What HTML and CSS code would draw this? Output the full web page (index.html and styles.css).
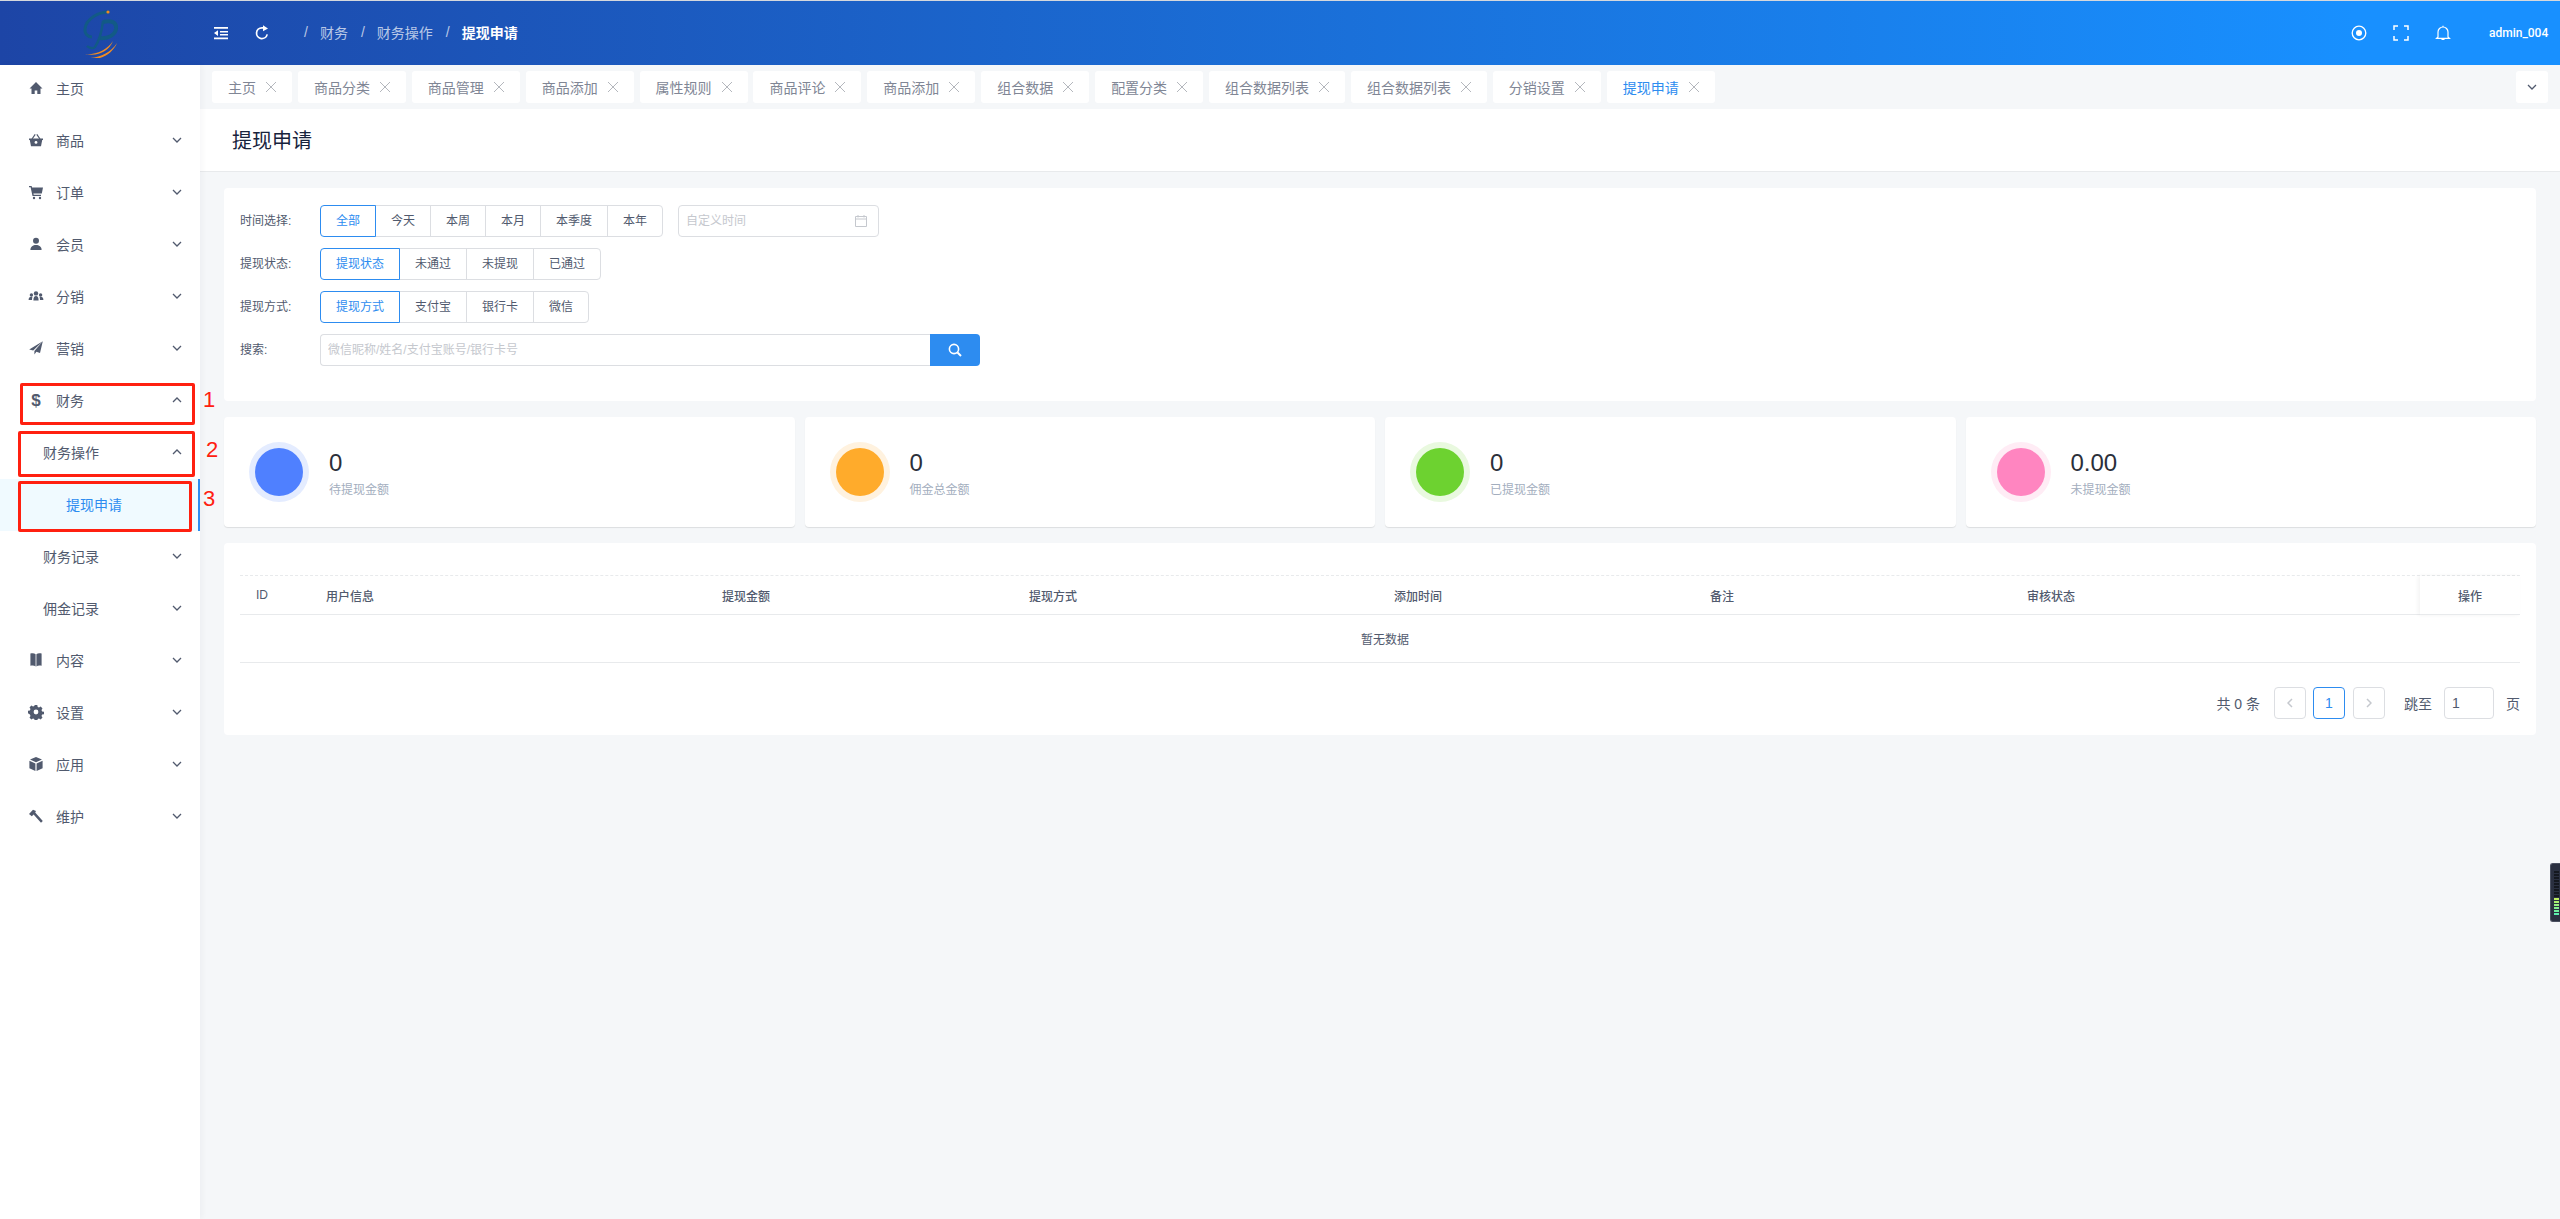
FILE: index.html
```html
<!DOCTYPE html>
<html lang="zh-CN">
<head>
  <meta charset="UTF-8">
  <title>提现申请</title>
  <link rel="stylesheet" href="styles.css">
</head>
<body>
  <div class="header">
    <div class="logo">
      <svg width="40" height="50" viewBox="0 0 40 50">
        <path d="M29 4C18 4 6 11 5 21c-.5 5 3 8 7 8" fill="none" stroke="#125a86" stroke-width="3"/>
        <path d="M23 14c8-2 14 0 13 7-1 6-8 10-16 9" fill="none" stroke="#125a86" stroke-width="4"/>
        <path d="M23 13c-1 9-4 20-8 26-1 2-6 1-8-1" fill="none" stroke="#125a86" stroke-width="2.4"/>
        <circle cx="28" cy="4" r="1.6" fill="#f08c1e"/>
        <path d="M5 46C16 47 27 42 33 33 29 43 18 49 5 46z" fill="#f28c22"/>
        <path d="M4 50C17 51 30 46 37 35 32 47 18 54 4 50z" fill="#f28c22"/>
      </svg>
    </div>
    <svg class="head-icon" viewBox="0 0 16 16"><path d="M1 2h14v1.7H1zM7 6h8v1.6H7zM7 9h8v1.6H7zM1 12.6h14v1.7H1zM5 5.2v5.8L1 8.1z"/></svg>
    <svg class="head-icon refresh" viewBox="0 0 16 16"><path d="M13.2 9.4A5.4 5.4 0 1 1 8 2.8h1.6" fill="none" stroke="#fff" stroke-width="1.7"/><path d="M9 .2 14 3.4 9 6.2z"/></svg>
    <div class="crumbs">
      <span class="sep">/</span><span>财务</span>
      <span class="sep">/</span><span>财务操作</span>
      <span class="sep">/</span><span class="current">提现申请</span>
    </div>
    <div class="head-right">
      <svg class="tool" viewBox="0 0 16 16"><circle cx="8" cy="8" r="6.8" fill="none" stroke="#fff" stroke-width="1.3"/><circle cx="8" cy="8" r="3"/></svg>
      <svg class="tool" viewBox="0 0 16 16"><path d="M1 5V1h4M11 1h4v4M15 11v4h-4M5 15H1v-4" fill="none" stroke="#fff" stroke-width="1.5"/></svg>
      <svg class="tool" viewBox="0 0 16 16"><path d="M3 12V7a5 5 0 0 1 10 0v5l1.4 1.3H1.6zM6.5 14.4h3M8 .8v1.4" fill="none" stroke="#fff" stroke-width="1.2"/></svg>
      <span class="user">admin_004</span>
    </div>
  </div>

  <div class="layout">
    <div class="sidebar">
      <div class="menu-item"><svg class="menu-icon" viewBox="0 0 16 16"><path d="M8 2 1.5 8.4h2V14h3.2v-3.6h2.6V14h3.2V8.4h2z"/></svg>主页</div>
      <div class="menu-item"><svg class="menu-icon" viewBox="0 0 16 16"><path d="M1 6.6h14V8h-.8L13 14.2H3L1.8 8H1z"/><path d="M4 7 7.2 2.4M12 7 8.8 2.4" stroke="#515a6e" stroke-width="1.2"/><circle cx="8" cy="10.4" r="1.4" fill="#fff"/></svg>商品<svg class="chev" viewBox="0 0 10 6"><path d="M1 1l4 4 4-4"/></svg></div>
      <div class="menu-item"><svg class="menu-icon" viewBox="0 0 16 16"><path d="M1 2h2.6l.5 1.6H15l-1.2 6H5.4l.3 1.2H13v1.2H4.5L2.6 3.2H1z"/><circle cx="6" cy="14" r="1.2"/><circle cx="12" cy="14" r="1.2"/></svg>订单<svg class="chev" viewBox="0 0 10 6"><path d="M1 1l4 4 4-4"/></svg></div>
      <div class="menu-item"><svg class="menu-icon" viewBox="0 0 16 16"><circle cx="8" cy="4.8" r="3"/><path d="M2.4 14c0-3.4 2.6-5 5.6-5s5.6 1.6 5.6 5z"/></svg>会员<svg class="chev" viewBox="0 0 10 6"><path d="M1 1l4 4 4-4"/></svg></div>
      <div class="menu-item"><svg class="menu-icon" viewBox="0 0 16 16"><circle cx="8" cy="5.4" r="2.2"/><path d="M5.4 12.6c0-3.4 1-4.6 2.6-4.6s2.6 1.2 2.6 4.6z"/><circle cx="3.4" cy="7" r="1.7"/><path d="M.6 12c0-2 1-3.2 2.8-3.2.5 0 .8.1 1 .2-.3 1-.4 1.9-.4 3z"/><circle cx="12.6" cy="7" r="1.7"/><path d="M15.4 12c0-2-1-3.2-2.8-3.2-.5 0-.8.1-1 .2.3 1 .4 1.9.4 3z"/></svg>分销<svg class="chev" viewBox="0 0 10 6"><path d="M1 1l4 4 4-4"/></svg></div>
      <div class="menu-item"><svg class="menu-icon" viewBox="0 0 16 16"><path d="M14.8 1.2 1.2 9.4l4 1.2zM14.8 1.2 6.4 11v3.400l2-2.600 3.600 1.200z"/></svg>营销<svg class="chev" viewBox="0 0 10 6"><path d="M1 1l4 4 4-4"/></svg></div>
      <div class="menu-item"><span class="dollar">$</span>财务<svg class="chev" viewBox="0 0 10 6"><path d="M1 5l4-4 4 4"/></svg></div>
      <div class="menu-item sub">财务操作<svg class="chev" viewBox="0 0 10 6"><path d="M1 5l4-4 4 4"/></svg></div>
      <div class="menu-item leaf">提现申请</div>
      <div class="menu-item sub">财务记录<svg class="chev" viewBox="0 0 10 6"><path d="M1 1l4 4 4-4"/></svg></div>
      <div class="menu-item sub">佣金记录<svg class="chev" viewBox="0 0 10 6"><path d="M1 1l4 4 4-4"/></svg></div>
      <div class="menu-item"><svg class="menu-icon" viewBox="0 0 16 16"><path d="M2.4 1.600c2-.6 4-.4 5.200.6V14.400c-1.200-1-3.200-1.200-5.200-.6zM13.600 1.600c-2-.6-4-.4-5.200.6V14.400c1.200-1 3.200-1.200 5.200-.6z"/></svg>内容<svg class="chev" viewBox="0 0 10 6"><path d="M1 1l4 4 4-4"/></svg></div>
      <div class="menu-item"><svg class="menu-icon" viewBox="0 0 16 16"><path fill-rule="evenodd" d="M6.700 1h2.600l.4 1.900 1.300.6 1.700-1 1.800 1.900-1 1.600.6 1.400 1.900.4v2.400l-1.900.4-.6 1.400 1 1.600-1.800 1.900-1.700-1-1.300.6-.4 1.900H6.700l-.4-1.900-1.300-.6-1.700 1-1.800-1.900 1-1.600-.6-1.400L0 9.200V6.800l1.900-.4.600-1.400-1-1.600 1.800-1.900 1.700 1 1.300-.6zM8 5.600a2.400 2.400 0 1 0 0 4.800 2.400 2.400 0 0 0 0-4.800z"/></svg>设置<svg class="chev" viewBox="0 0 10 6"><path d="M1 1l4 4 4-4"/></svg></div>
      <div class="menu-item"><svg class="menu-icon" viewBox="0 0 16 16"><path d="M8 1 14 3.600 8 6.200 2 3.600zM1.400 4.800 7.400 7.400V15L1.400 12.200zM14.600 4.800 8.600 7.400V15l6-2.800z"/></svg>应用<svg class="chev" viewBox="0 0 10 6"><path d="M1 1l4 4 4-4"/></svg></div>
      <div class="menu-item"><svg class="menu-icon" viewBox="0 0 16 16"><path d="M1 6 5 1.800 8 3 7.200 4.600 14.800 13 13 14.800 5.600 6.400 3.800 8.200z"/></svg>维护<svg class="chev" viewBox="0 0 10 6"><path d="M1 1l4 4 4-4"/></svg></div>
    </div>

    <div class="main">
      <div class="tagbar">
        <div class="tag">主页<span class="tag-x"></span></div>
        <div class="tag">商品分类<span class="tag-x"></span></div>
        <div class="tag">商品管理<span class="tag-x"></span></div>
        <div class="tag">商品添加<span class="tag-x"></span></div>
        <div class="tag">属性规则<span class="tag-x"></span></div>
        <div class="tag">商品评论<span class="tag-x"></span></div>
        <div class="tag">商品添加<span class="tag-x"></span></div>
        <div class="tag">组合数据<span class="tag-x"></span></div>
        <div class="tag">配置分类<span class="tag-x"></span></div>
        <div class="tag">组合数据列表<span class="tag-x"></span></div>
        <div class="tag">组合数据列表<span class="tag-x"></span></div>
        <div class="tag">分销设置<span class="tag-x"></span></div>
        <div class="tag tag-active">提现申请<span class="tag-x"></span></div>
        <div class="tag-more"><svg class="chev" viewBox="0 0 10 6"><path d="M1 1l4 4 4-4"/></svg></div>
      </div>

      <div class="page-head">提现申请</div>

      <div class="content">
        <div class="card filter">
          <div class="filter-row">
            <label>时间选择:</label>
            <div class="btn-group">
              <span class="active">全部</span><span>今天</span><span>本周</span><span>本月</span><span>本季度</span><span>本年</span>
            </div>
            <div class="date-box">
              <input type="text" placeholder="自定义时间">
              <svg width="14" height="14" viewBox="0 0 14 14"><path d="M1.500 2.500h11v10h-11zM1.500 5h11M4 1v2.500M10 1v2.500" fill="none" stroke="#c5c8ce"/></svg>
            </div>
          </div>
          <div class="filter-row">
            <label>提现状态:</label>
            <div class="btn-group">
              <span class="active">提现状态</span><span>未通过</span><span>未提现</span><span>已通过</span>
            </div>
          </div>
          <div class="filter-row">
            <label>提现方式:</label>
            <div class="btn-group">
              <span class="active">提现方式</span><span>支付宝</span><span>银行卡</span><span>微信</span>
            </div>
          </div>
          <div class="filter-row">
            <label>搜索:</label>
            <div class="search-box">
              <input type="text" placeholder="微信昵称/姓名/支付宝账号/银行卡号">
              <button type="button"><svg width="16" height="16" viewBox="0 0 16 16"><circle cx="7" cy="7" r="4.600" fill="none" stroke="#fff" stroke-width="1.600"/><path d="M10.500 10.500 14 14" stroke="#fff" stroke-width="2"/></svg></button>
            </div>
          </div>
        </div>

        <div class="stats">
          <div class="card stat">
            <div class="dot dot-blue"></div>
            <div><div class="stat-num">0</div><div class="stat-label">待提现金额</div></div>
          </div>
          <div class="card stat">
            <div class="dot dot-orange"></div>
            <div><div class="stat-num">0</div><div class="stat-label">佣金总金额</div></div>
          </div>
          <div class="card stat">
            <div class="dot dot-green"></div>
            <div><div class="stat-num">0</div><div class="stat-label">已提现金额</div></div>
          </div>
          <div class="card stat">
            <div class="dot dot-pink"></div>
            <div><div class="stat-num">0.00</div><div class="stat-label">未提现金额</div></div>
          </div>
        </div>

        <div class="card list">
          <table>
            <colgroup>
              <col class="c-id"><col class="c-user"><col class="c-money"><col class="c-way"><col class="c-time"><col class="c-note"><col class="c-state"><col class="c-op">
            </colgroup>
            <thead>
              <tr>
                <th>ID</th><th>用户信息</th><th>提现金额</th><th>提现方式</th><th>添加时间</th><th>备注</th><th>审核状态</th><th class="op">操作</th>
              </tr>
            </thead>
            <tbody>
              <tr><td colspan="8">暂无数据</td></tr>
            </tbody>
          </table>
          <div class="pager">
            <span class="total">共 0 条</span>
            <span class="page-btn page-prev"><svg class="pg-arrow" viewBox="0 0 6 10"><path d="M5 1 1 5l4 4"/></svg></span>
            <span class="page-btn page-on">1</span>
            <span class="page-btn"><svg class="pg-arrow" viewBox="0 0 6 10"><path d="M1 1l4 4-4 4"/></svg></span>
            <span class="jump">跳至</span>
            <input class="page-input" type="text" value="1">
            <span>页</span>
          </div>
        </div>
      </div>
    </div>
  </div>

  <div class="mark mark-1"></div>
  <div class="mark mark-2"></div>
  <div class="mark mark-3"></div>
  <span class="mark-no no-1">1</span>
  <span class="mark-no no-2">2</span>
  <span class="mark-no no-3">3</span>

  <div class="meter"><div class="meter-off"></div><div class="meter-on"></div></div>
</body>
</html>
```

FILE: styles.css
```css
* {
  box-sizing: border-box;
}

body {
  margin: 0;
  min-height: 1219px;
  position: relative;
  overflow: hidden;
  font-family: "Liberation Sans", "Noto Sans CJK SC", sans-serif;
  font-size: 14px;
  color: #515a6e;
  background: #f5f7f9;
}

input {
  font-family: inherit;
  border: none;
  outline: none;
  color: #515a6e;
  background: transparent;
}

input::placeholder {
  color: #c5c8ce;
}

/* top bar */
.header {
  height: 65px;
  display: flex;
  align-items: center;
  border-top: 1px solid #d5d8dd;
  background: linear-gradient(90deg, #1d45a6, #1890ff 92%);
  color: #fff;
}

.logo {
  width: 200px;
  height: 64px;
  display: flex;
  align-items: center;
  justify-content: center;
  flex-shrink: 0;
}

.head-icon {
  width: 16px;
  height: 16px;
  margin-left: 13px;
  fill: #fff;
}

.refresh {
  margin-left: 25px;
}

.crumbs {
  display: flex;
  align-items: center;
  margin-left: 21px;
  padding-bottom: 2px;
  color: rgba(255, 255, 255, 0.7);
}

.sep {
  margin: 0 12px 0 13px;
}

.current {
  color: #fff;
  font-weight: bold;
}

.head-right {
  margin-left: auto;
  display: flex;
  align-items: center;
  padding-right: 12px;
}

.tool {
  width: 16px;
  height: 16px;
  margin-right: 26px;
  fill: #fff;
}

.user {
  width: 59px;
  font-family: Roboto, sans-serif;
  font-size: 12px;
  font-weight: 500;
  margin-left: 12px;
  white-space: nowrap;
}

.layout {
  display: flex;
  min-height: 1154px;
}

/* sidebar */
.sidebar {
  width: 200px;
  flex-shrink: 0;
  background: #fff;
  box-shadow: 2px 0 6px rgba(0, 21, 41, 0.04);
  position: relative;
}

.menu-item {
  height: 52px;
  display: flex;
  align-items: center;
  padding: 0 18px 2px 28px;
  position: relative;
  top: -2px;
}

.menu-icon {
  width: 16px;
  height: 16px;
  margin-right: 12px;
  fill: #515a6e;
}

.dollar {
  width: 16px;
  margin-right: 12px;
  padding-top: 2px;
  text-align: center;
  font-size: 17px;
  font-weight: bold;
}

.chev {
  width: 10px;
  height: 6px;
  margin-left: auto;
  fill: none;
  stroke: #515a6e;
  stroke-width: 1.3;
}

.sub {
  padding-left: 43px;
}

.leaf {
  padding-left: 66px;
  color: #2d8cf0;
  background: #f0faff;
  border-right: 2px solid #2d8cf0;
}

/* tags */
.main {
  flex: 1;
  min-width: 0;
}

.tagbar {
  height: 44px;
  display: flex;
  gap: 5.9px;
  padding: 6px 12px;
}

.tag {
  height: 32px;
  display: flex;
  align-items: center;
  padding: 0 16px 1px;
  background: #fff;
  border-radius: 3px;
  color: #808695;
  white-space: nowrap;
}

.tag-active {
  color: #2d8cf0;
}

.tag-x {
  width: 10px;
  height: 10px;
  margin-left: 10px;
  background:
    linear-gradient(45deg, transparent 46%, #b4b7bd 46%, #b4b7bd 54%, transparent 54%),
    linear-gradient(-45deg, transparent 46%, #b4b7bd 46%, #b4b7bd 54%, transparent 54%);
}

.tag-more {
  width: 32px;
  height: 32px;
  margin-left: auto;
  display: flex;
  align-items: center;
  justify-content: center;
  background: #fff;
  border-radius: 3px;
}

.tag-more .chev {
  margin-left: 0;
}

.page-head {
  height: 63px;
  display: flex;
  align-items: center;
  padding-left: 32px;
  padding-bottom: 2px;
  background: #fff;
  border-bottom: 1px solid #e8eaec;
  font-size: 20px;
  color: #17233d;
}

.content {
  padding: 16px 24px;
}

.card {
  background: #fff;
  border-radius: 4px;
}

/* filter card */
.filter {
  padding: 17px 16px 24px;
  font-size: 12px;
}

.filter-row {
  display: flex;
  align-items: center;
  height: 32px;
  margin-bottom: 11px;
}

.filter-row label {
  width: 80px;
  flex-shrink: 0;
  padding-bottom: 3px;
}

.btn-group {
  display: flex;
}

.btn-group span {
  height: 32px;
  line-height: 30px;
  padding: 0 15px;
  border: 1px solid #dcdee2;
  margin-left: -1px;
  white-space: nowrap;
}

.btn-group span:first-child {
  margin-left: 0;
  border-radius: 4px 0 0 4px;
}

.btn-group span:last-child {
  border-radius: 0 4px 4px 0;
}

.btn-group .active {
  color: #2d8cf0;
  border-color: #2d8cf0;
  position: relative;
}

.date-box {
  width: 201px;
  height: 32px;
  margin-left: 15px;
  display: flex;
  align-items: center;
  padding: 0 10px 0 7px;
  border: 1px solid #dcdee2;
  border-radius: 4px;
}

.date-box input {
  flex: 1;
  min-width: 0;
  padding: 0;
  font-size: 12px;
}

.search-box {
  width: 660px;
  height: 32px;
  display: flex;
}

.search-box input {
  flex: 1;
  padding: 0 7px;
  font-size: 12px;
  border: 1px solid #dcdee2;
  border-right: none;
  border-radius: 4px 0 0 4px;
}

.search-box button {
  width: 50px;
  display: flex;
  align-items: center;
  justify-content: center;
  border: none;
  border-radius: 0 4px 4px 0;
  background: #2d8cf0;
}

/* stat cards */
.stats {
  display: grid;
  grid-template-columns: repeat(4, 1fr);
  gap: 10px;
  margin-top: 16px;
}

.stat {
  height: 110px;
  display: flex;
  align-items: center;
  padding-left: 31px;
  box-shadow: 0 1px 1px rgba(0, 0, 0, 0.1);
}

.dot {
  width: 48px;
  height: 48px;
  margin-right: 26px;
  border-radius: 50%;
}

.dot-blue {
  background: #4f80ff;
  box-shadow: 0 0 0 6px #e4ecff;
}

.dot-orange {
  background: #ffab2b;
  box-shadow: 0 0 0 6px #fff2df;
}

.dot-green {
  background: #6dd230;
  box-shadow: 0 0 0 6px #e9f9df;
}

.dot-pink {
  background: #ff85c0;
  box-shadow: 0 0 0 6px #ffecf5;
}

.stat-num {
  padding-top: 3px;
  font-size: 24px;
  line-height: 30px;
  color: #2b2f3a;
}

.stat-label {
  margin-top: 2px;
  font-size: 12px;
  line-height: 20px;
  color: #a3aebe;
}

/* table */
.list {
  margin-top: 16px;
  padding: 32px 16px 16px;
}

table {
  width: 2280px;
  table-layout: fixed;
  border-collapse: separate;
  border-spacing: 0;
  font-size: 12px;
  border-top: 1px dashed #e8eaec;
}

.c-id { width: 70px; }
.c-user { width: 396px; }
.c-money { width: 307px; }
.c-way { width: 365px; }
.c-time { width: 316px; }
.c-note { width: 317px; }
.c-state { width: 409px; }
.c-op { width: 100px; }

th {
  height: 39px;
  padding: 0 16px;
  text-align: left;
  font-weight: 500;
  border-bottom: 1px solid #e8eaec;
}

th.op {
  text-align: center;
  box-shadow: -2px 0 4px rgba(0, 0, 0, 0.05);
}

td {
  height: 48px;
  padding-left: 11px;
  text-align: center;
  border-bottom: 1px solid #e8eaec;
}

.pager {
  display: flex;
  align-items: center;
  justify-content: flex-end;
  margin-top: 24px;
  height: 32px;
}

.total {
  margin-right: 14px;
}

.page-btn {
  width: 32px;
  height: 32px;
  display: flex;
  align-items: center;
  justify-content: center;
  margin-right: 8px;
  border: 1px solid #dcdee2;
  border-radius: 4px;
}

.page-prev {
  margin-right: 7px;
}

.page-on {
  color: #2d8cf0;
  border-color: #2d8cf0;
}

.pg-arrow {
  width: 6px;
  height: 10px;
  fill: none;
  stroke: #c5c8ce;
  stroke-width: 1.5;
}

.jump {
  margin-left: 11px;
  margin-right: 12px;
}

.page-input {
  width: 50px;
  height: 32px;
  padding: 0 7px;
  margin-right: 12px;
  font-size: 14px;
  border: 1px solid #dcdee2;
  border-radius: 4px;
}

/* red notes drawn over the menu */
.mark {
  position: absolute;
  border: 3px solid #ff2010;
  border-radius: 2px;
}

.mark-1 {
  left: 20px;
  top: 383px;
  width: 175px;
  height: 42px;
}

.mark-2 {
  left: 18px;
  top: 431px;
  width: 177px;
  height: 46px;
}

.mark-3 {
  left: 18px;
  top: 481px;
  width: 174px;
  height: 51px;
}

.mark-no {
  position: absolute;
  font-size: 22px;
  line-height: 24px;
  color: #ff2010;
}

.no-1 {
  left: 203px;
  top: 388px;
}

.no-2 {
  left: 206px;
  top: 438px;
}

.no-3 {
  left: 203px;
  top: 487px;
}

/* floating widget at the screen edge */
.meter {
  position: absolute;
  left: 2550px;
  top: 863px;
  width: 10px;
  height: 59px;
  padding: 7px 1px 0 3px;
  background: #2a3040;
  border: 1px solid #4a5060;
  border-right: none;
  border-radius: 3px 0 0 3px;
}

.meter-off {
  height: 27px;
  background: repeating-linear-gradient(#14181f 0 1.5px, #2a3040 1.5px 3px);
}

.meter-on {
  height: 18px;
  background:
    repeating-linear-gradient(transparent 0 2px, #2a3040 2px 3px),
    linear-gradient(#c4ef5c, #4ff0b8);
}
```
